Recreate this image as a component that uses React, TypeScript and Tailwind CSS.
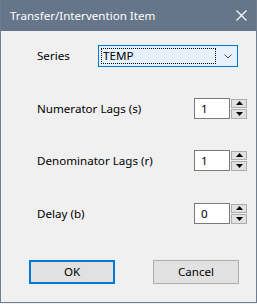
import React from 'react';

const font = { fontFamily: '"Noto Sans", "Open Sans", sans-serif' };

const SpinField = ({ label, value }: { label: string; value: string }) => (
  <div className="flex items-center h-[21px] pl-[36px] pr-[9px]">
    <span className="flex-1 text-[11.6px] text-black leading-none">{label}</span>
    <div className="w-[36px] h-[21px] border border-[#7a7a7a] bg-white flex items-center pl-[6px] text-[11.6px] text-black leading-none">
      {value}
    </div>
    <div className="ml-[1px] flex flex-col gap-[1px] w-[16px]">
      <div className="h-[9px] border border-[#adadad] bg-[#e1e1e1] flex items-center justify-center">
        <svg width="7" height="4" viewBox="0 0 7 4"><path d="M3.5 0 L7 4 L0 4 Z" fill="#000" /></svg>
      </div>
      <div className="h-[10px] border border-[#adadad] bg-[#e1e1e1] flex items-center justify-center">
        <svg width="7" height="4" viewBox="0 0 7 4"><path d="M0 0 L7 0 L3.5 4 Z" fill="#000" /></svg>
      </div>
    </div>
  </div>
);

export default function App() {
  return (
    <div className="w-[257px] h-[304px] bg-[#f0f0f0]" style={font}>
      <div className="w-[257px] h-[303px] flex flex-col border-l border-r border-b border-[#6f7d8e] bg-[#f0f0f0]">
        {/* title bar */}
        <div className="h-[31px] bg-[#66768a] flex items-center justify-between pl-[9px] pr-[9px]">
          <span className="text-[11.6px] text-white leading-none">Transfer/Intervention Item</span>
          <svg width="11" height="11" viewBox="0 0 11 11">
            <path d="M0.5 0.5 L10.5 10.5 M10.5 0.5 L0.5 10.5" stroke="#fff" strokeWidth="1.1" />
          </svg>
        </div>

        {/* series row */}
        <div className="flex items-center h-[22px] mt-[14px] pl-[36px]">
          <span className="w-[61px] text-[11.6px] text-black leading-none">Series</span>
          <div className="w-[140px] h-[22px] border border-[#0078d7] bg-[#e5f1fb] flex items-center pl-[2px] pr-[5px]">
            <div className="flex-1 h-[16px] border border-dotted border-black flex items-center pl-[1px] text-[11.6px] text-black leading-none">
              TEMP
            </div>
            <svg className="ml-[8px]" width="8" height="5" viewBox="0 0 8 5">
              <path d="M0.5 0.5 L4 4 L7.5 0.5" stroke="#444" strokeWidth="1" fill="none" />
            </svg>
          </div>
        </div>

        <div className="flex flex-col mt-[31px] gap-[31px]">
          <SpinField label="Numerator Lags (s)" value="1" />
          <SpinField label="Denominator Lags (r)" value="1" />
          <div className="mt-[1px]">
            <SpinField label="Delay (b)" value="0" />
          </div>
        </div>

        {/* buttons */}
        <div className="flex justify-between mt-[36px] pl-[28px] pr-[17px]">
          <button className="w-[86px] h-[24px] border-2 border-[#0078d7] bg-[#e1e1e1] text-[11.6px] text-black leading-none">
            OK
          </button>
          <button className="w-[86px] h-[24px] border border-[#adadad] bg-[#e1e1e1] text-[11.6px] text-black leading-none">
            Cancel
          </button>
        </div>
      </div>
    </div>
  );
}
